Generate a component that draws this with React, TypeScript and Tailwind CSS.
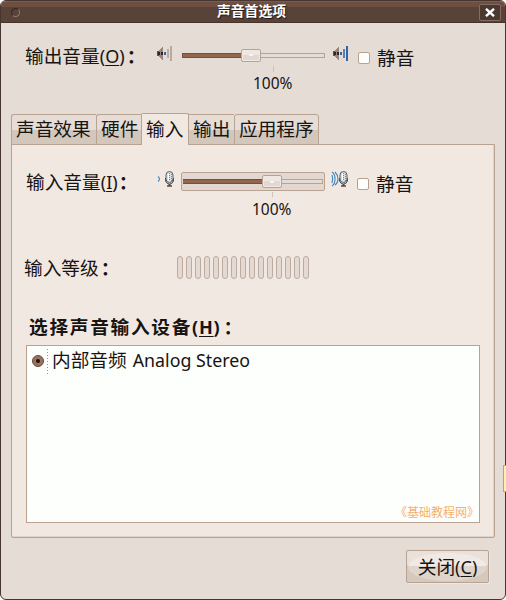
import React from 'react';

const row = 'flex items-start';
const label = 'flex shrink-0 whitespace-nowrap leading-[26px] h-[26px]';
const key = 'underline decoration-1 underline-offset-2';

function Speaker({ loud }: { loud?: boolean }) {
  return (
    <svg width="16" height="16" viewBox="0 0 16 16" shapeRendering="crispEdges" className="block shrink-0">
      <path d="M0 5h2v5H0z" fill="#625148" />
      <path d="M2 4h1v7H2zM3 3h1v9H3zM4 2h1v11H4zM5 1h1v13H5z" fill="#9a8479" />
      <path d="M1 6h2v3H1zM4 6h2v3H4z" fill="#292725" />
      <path d="M7 6h2v3H7z" fill="#3465a4" />
      <path d="M10 3h2v9h-2z" fill={loud ? '#5582b8' : '#b9ada4'} />
      <path d="M13 0h2v15h-2z" fill={loud ? '#3465a4' : '#b9a9a0'} />
    </svg>
  );
}

function Mic({ loud }: { loud?: boolean }) {
  return (
    <svg width="18" height="18" viewBox="0 0 18 18" className="block shrink-0">
      <g fill="none" stroke="#4384bc" strokeWidth="1.1">
        {loud ? (
          <path d="M1 1Q4 3 4 8T1 15M1 4Q2.5 8 1 12M4 1Q7 4 7 8T4 14" />
        ) : (
          <path d="M1 5.5Q4 8 1 10.5" />
        )}
      </g>
      <rect x="9" y=".5" width="7" height="11" rx="3.5" fill="#d9dedc" stroke="#596168" />
      <path d="M11.5 2.5v7" stroke="#fff" />
      <path d="M14.5 3v7M12.5 2v8" stroke="#83898c" strokeDasharray="1 1" />
      <path d="M8.5 7v3q1 3 4 3t4-3V7" fill="none" stroke="#50565b" />
      <path d="M12.5 13v2" stroke="#50463f" strokeWidth="2" />
      <path d="M10 15h5" stroke="#624337" strokeWidth="1.5" />
    </svg>
  );
}

function Thumb() {
  return (
    <div className="flex h-[13px] w-[20px] shrink-0 items-center justify-center rounded-[2px] border border-[#b7a294] bg-linear-to-b from-[#eee6e1] from-50% to-[#e2d8d1] to-50% shadow-[inset_0_0_0_1px_#f0e8e3]">
      <div className="h-[2px] w-[4px] bg-[#f7f2ef]" />
    </div>
  );
}

function Check() {
  return <div className="h-[12px] w-[12px] shrink-0 rounded-[2px] border border-[#b7a18f] bg-[#fdfffc]" />;
}

const tabBase =
  'h-[31px] shrink-0 whitespace-nowrap border border-r-0 border-[#b9a28f] bg-linear-to-b from-[#e6ddd7] from-52% to-[#d3c6bb] to-52% pl-[4px] leading-[28px]';

export default function App() {
  return (
    <div className="relative h-[600px] w-[506px] overflow-hidden bg-white font-['Noto_Sans','Noto_Sans_CJK_SC',sans-serif] text-[18.7px] text-[#171412]">
      <div className="flex h-full w-full flex-col overflow-hidden rounded-[6px] border border-[#463530] bg-[#e5dcd6]">
        <header className="flex h-[22px] shrink-0 items-center border-t border-b border-t-[#7e5c4d] border-b-[#44332b] bg-linear-to-b from-[#6d4e40] from-25% to-[#594339] to-25%">
          <div className="ml-[10px] h-[9px] w-[9px] shrink-0 rounded-full border border-[#35271f] border-r-[#947b70] border-b-[#947b70]" />
          <h1 className="ml-[197px] w-[79px] shrink-0 whitespace-nowrap pb-[2px] text-[13.8px] leading-[16px] font-bold text-white [text-shadow:1px_1px_1px_#201814]">
            声音首选项
          </h1>
          <div className="ml-[183px] flex h-[17px] w-[22px] shrink-0 items-center justify-center rounded-[2px] border border-[#846c61] bg-[#4a3931]">
            <svg width="10" height="9" viewBox="0 0 10 9">
              <path d="M1 .8l8 7.4M9 .8L1 8.2" stroke="#fff" strokeWidth="2.4" />
            </svg>
          </div>
        </header>

        <section className={`${row} h-[90px] shrink-0 pt-[9px] pl-[24px]`}>
          <span className={`${label} mt-[11px] w-[131px]`}>
            输出音量<span className="text-[18px]">(<u className={key}>O</u>)</span>
            <b className="ml-[2px]">：</b>
          </span>
          <div className="mt-[14px] ml-[1px]"><Speaker /></div>
          <div className="ml-[9px] w-[143px] shrink-0">
            <div className="mt-[16px] flex h-[14px] items-center">
              <div className="h-[5px] w-[59px] border border-r-0 border-[#76503e] bg-[#94664e]" />
              <Thumb />
              <div className="h-[5px] w-[64px] border border-l-0 border-[#b8a392] bg-[#e5dcd6]" />
            </div>
            <div className="mt-[4px] ml-[91px] h-[6px] w-px bg-[#cec2b8]" />
            <div className="ml-[71px] pt-[1px] text-[15.5px] leading-[20px]">100%</div>
          </div>
          <div className="mt-[14px] ml-[8px]"><Speaker loud /></div>
          <div className="mt-[20px] ml-[9px]"><Check /></div>
          <span className={`${label} mt-[13px] ml-[7px]`}>静音</span>
        </section>

        <nav className="z-10 flex h-[32px] shrink-0 items-end pl-[10px]">
          <div className={`${tabBase} w-[85px] rounded-tl-[3px]`}>声音效果</div>
          <div className={`${tabBase} w-[45px] rounded-tl-[3px]`}>硬件</div>
          <div className="h-[32px] w-[48px] shrink-0 rounded-t-[2px] border border-b-0 border-[#b9a28f] bg-[#f1e8e2] pl-[4px] leading-[29px]">
            输入
          </div>
          <div className={`${tabBase} w-[45px] border-l-0`}>输出</div>
          <div className="h-[31px] w-[85px] shrink-0 whitespace-nowrap rounded-t-[3px] border border-[#b9a28f] bg-linear-to-b from-[#e6ddd7] from-52% to-[#d3c6bb] to-52% pl-[4px] leading-[28px]">
            应用程序
          </div>
        </nav>

        <main className="-mt-px ml-[10px] h-[394px] w-[484px] shrink-0 rounded-b-[2px] border border-[#b9a28f] bg-[#f1e8e2] shadow-[inset_-1px_-1px_0_#dfd3ca]">
          <section className={`${row} h-[103px] pl-[14px]`}>
            <span className={`${label} mt-[24px] w-[126px]`}>
              输入音量<span className="text-[18px]">(<u className={key}>I</u>)</span>
              <b className="ml-[1px]">：</b>
            </span>
            <div className="mt-[26px] ml-[5px]"><Mic /></div>
            <div className="ml-[6px] w-[144px] shrink-0">
              <div className="mt-[27px] flex h-[19px] items-center rounded-[2px] border border-[#b9a28f] bg-[#e2d8d1] px-px">
                <div className="h-[5px] w-[79px] border-y border-y-[#76503e] bg-[#94664e]" />
                <Thumb />
                <div className="h-[5px] w-[41px] border border-l-0 border-[#b8a392] bg-[#e5dcd6]" />
              </div>
              <div className="mt-[1px] ml-[91px] h-[5px] w-px bg-[#cec2b8]" />
              <div className="ml-[71px] pt-[2px] text-[15.5px] leading-[20px]">100%</div>
            </div>
            <div className="mt-[26px] ml-[6px]"><Mic loud /></div>
            <div className="mt-[33px] ml-[8px]"><Check /></div>
            <span className={`${label} mt-[26px] ml-[7px]`}>静音</span>
          </section>

          <section className={`${row} h-[66px] pl-[12px]`}>
            <span className={`${label} mt-[7px] w-[153px]`}>
              输入等级<b className="ml-[2px]">：</b>
            </span>
            <div className="mt-[8px] flex gap-[3px]">
              {Array.from({ length: 15 }, (_, i) => (
                <div key={i} className="h-[23px] w-[6px] rounded-[3px] border border-[#bcab9e] bg-[#e4dad3]" />
              ))}
            </div>
          </section>

          <h2 className="flex h-[31px] pl-[17px] text-[18.7px] leading-[26px] font-bold tracking-[1.7px] whitespace-nowrap">
            选择声音输入设备
            <span className="text-[18px] tracking-[0.8px]">(<u className={key}>H</u>)</span>
            <span className="ml-[3px]">：</span>
          </h2>

          <div className="ml-[14px] flex h-[178px] w-[454px] flex-col border border-[#b9a28f] bg-[#fdfffc]">
            <div className="flex h-[30px] shrink-0 items-center pl-[5px]">
              <div className="flex h-[12px] w-[12px] items-center justify-center rounded-full border border-[#654b3e] bg-[#99715c]">
                <div className="h-[4px] w-[4px] rounded-full bg-[#1c1411]" />
              </div>
              <div className="mt-[2px] ml-[3px] h-[26px] w-px bg-[repeating-linear-gradient(to_bottom,#969693_0_1px,transparent_1px_3px)]" />
              <span className="-mt-[2px] ml-[4px] flex whitespace-nowrap leading-[26px]">
                内部音频<span className="ml-[6px] text-[17.8px]">Analog Stereo</span>
              </span>
            </div>
            <div className="mt-auto self-end pb-[2px] text-[12px] leading-[17px] whitespace-nowrap text-[#f9ae6b] font-['Noto_Sans_CJK_SC',sans-serif]">
              《基础教程网》
            </div>
          </div>
        </main>

        <button className="mt-[12px] ml-[405px] h-[33px] w-[83px] shrink-0 rounded-[2px] border border-[#b9a28f] bg-linear-to-b from-[#e9e1dc] from-45% to-[#d5c9be] to-45% p-px leading-[28px] shadow-[1px_1px_0_#eee7e2]">
          <span className="block rounded-[50%] bg-linear-to-b from-[#f1e9e4] from-45% to-[#dfd5cd] to-45% whitespace-nowrap">
            关闭<span className="text-[18px]">(<u className={key}>C</u>)</span>
          </span>
        </button>
      </div>
      <div className="absolute top-[465px] right-0 z-20 h-[27px] w-[3px] border border-r-0 border-[#c5a168] bg-[#fff0ad]" />
    </div>
  );
}
